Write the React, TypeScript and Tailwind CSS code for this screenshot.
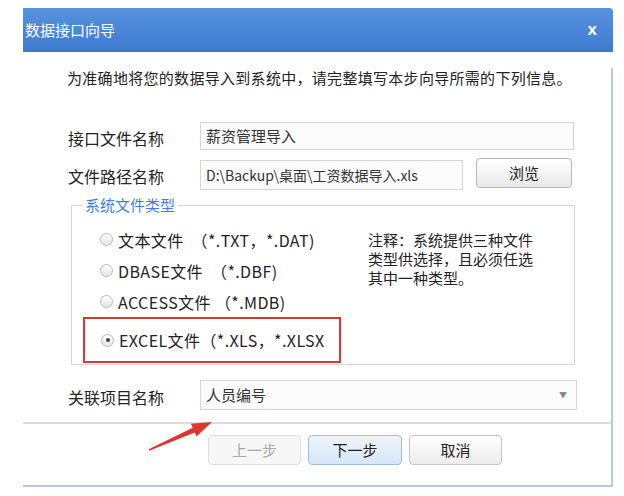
import React from "react";

const cjk = { fontFamily: '"Noto Sans CJK SC", "Liberation Sans", sans-serif' };

function Radio({ checked }: { checked?: boolean }) {
  return (
    <span className="w-[13px] h-[13px] rounded-full border border-[#b9b9b9] bg-linear-to-b from-white to-[#e6e6e6] flex items-center justify-center shrink-0">
      {checked && <span className="w-[4px] h-[4px] rounded-full bg-[#444]" />}
    </span>
  );
}

function RadioRow({ text, checked }: { text: string; checked?: boolean }) {
  return (
    <div className="h-[31px] flex items-center pl-[28px] gap-[5px] text-[16px] tracking-[0.4px] text-[#222]">
      <Radio checked={checked} />
      <span className="whitespace-pre">{text}</span>
    </div>
  );
}

function App() {
  return (
    <div className="w-[624px] h-[496px] bg-white overflow-hidden" style={cjk}>
      <div className="relative ml-[23px] mt-[8px] w-[590px]">
        <div className="h-[44px] rounded-tr-[4px] bg-linear-to-b from-[#5893df] to-[#3d7acf] flex items-center justify-between pl-[2px] pr-[16px]">
          <span className="text-[15px] text-white">数据接口向导</span>
          <span className="text-[17px] font-bold text-white" style={{ fontFamily: '"Liberation Sans", sans-serif' }}>x</span>
        </div>

        <div className="border-r-2 border-b-2 border-r-[#b3cbe9] border-b-[#b7c6d8] pb-[20px]">
          <div className="mt-[16px] pl-[44px] text-[15px] leading-[20px] text-[#222] tracking-[0.3px]">
            为准确地将您的数据导入到系统中，请完整填写本步向导所需的下列信息。
          </div>

          <div className="mt-[34px] flex items-center pl-[45px]">
            <span className="w-[132px] text-[16px] text-[#222] pt-[4px]">接口文件名称</span>
            <div className="w-[374px] h-[28px] border border-[#d6d6d6] bg-[#fbfbfb] flex items-center pl-[5px] text-[15px] text-[#333]">
              薪资管理导入
            </div>
          </div>

          <div className="mt-[8px] flex items-start pl-[45px]">
            <span className="w-[132px] h-[32px] flex items-center text-[16px] text-[#222] pt-[4px]">文件路径名称</span>
            <div className="mt-[2px] w-[263px] h-[30px] border border-[#d6d6d6] bg-[#fbfbfb] flex items-center pl-[5px] text-[14px] text-[#333]">
              D:\Backup\桌面\工资数据导入.xls
            </div>
            <button className="ml-[13px] w-[96px] h-[30px] rounded-[4px] border border-[#b4b4b4] bg-linear-to-b from-white to-[#e9e9e9] text-[15px] text-[#222]">
              浏览
            </button>
          </div>

          <fieldset className="mt-[6px] ml-[48px] w-[504px] border border-[#d4d4d4] pb-[1px]">
            <legend className="ml-[10px] px-[3px] text-[15px] leading-[18px] text-[#3f7fd8]">系统文件类型</legend>
            <div className="pt-[10px] flex">
              <div className="w-[296px]">
                <RadioRow text="文本文件  （*.TXT，*.DAT)" />
                <RadioRow text="DBASE文件  （*.DBF)" />
                <RadioRow text="ACCESS文件 （*.MDB)" />
                <div className="ml-[11px] w-[258px] h-[46px] border-2 border-[#d23a35] flex items-center pl-[16px] gap-[5px] text-[16px] tracking-[0.4px] text-[#222]">
                  <Radio checked />
                  <span className="whitespace-pre">EXCEL文件（*.XLS，*.XLSX</span>
                </div>
              </div>
              <div className="pt-[6px] text-[15px] leading-[19px] text-[#222]">
                <div>注释：系统提供三种文件</div>
                <div>类型供选择，且必须任选</div>
                <div>其中一种类型。</div>
              </div>
            </div>
          </fieldset>

          <div className="mt-[15px] flex items-center pl-[45px]">
            <span className="w-[132px] text-[16px] text-[#222] pt-[4px]">关联项目名称</span>
            <div className="w-[377px] h-[30px] border border-[#d6d6d6] bg-[#fbfbfb] flex items-center justify-between pl-[5px] pr-[9px] text-[15px] text-[#333]">
              <span>人员编号</span>
              <span className="text-[8px] text-[#888]">▼</span>
            </div>
          </div>

          <div className="mt-[12px] border-t-2 border-[#dcdcdc]" />

          <div className="mt-[11px] flex gap-[7px] pl-[185px]">
            <button className="w-[93px] h-[30px] rounded-[4px] border border-[#dedede] bg-[#f7f7f7] text-[15px] text-[#a8a8a8]">
              上一步
            </button>
            <button className="w-[94px] h-[30px] rounded-[4px] border border-[#9dbde3] bg-linear-to-b from-[#eef5fd] to-[#d6e6f7] text-[15px] text-[#222]">
              下一步
            </button>
            <button className="w-[93px] h-[30px] rounded-[4px] border border-[#c4c4c4] bg-linear-to-b from-white to-[#ececec] text-[15px] text-[#222]">
              取消
            </button>
          </div>
        </div>

        <svg className="absolute left-[120px] top-[410px]" width="80" height="40" viewBox="0 0 80 40">
          <polygon
            points="5.7,31.3 49.7,9.8 47.9,5.7 69,4 53.5,18.5 51.7,14.4 6.3,32.7"
            fill="#e0352f"
          />
        </svg>
      </div>
    </div>
  );
}

export default App;
